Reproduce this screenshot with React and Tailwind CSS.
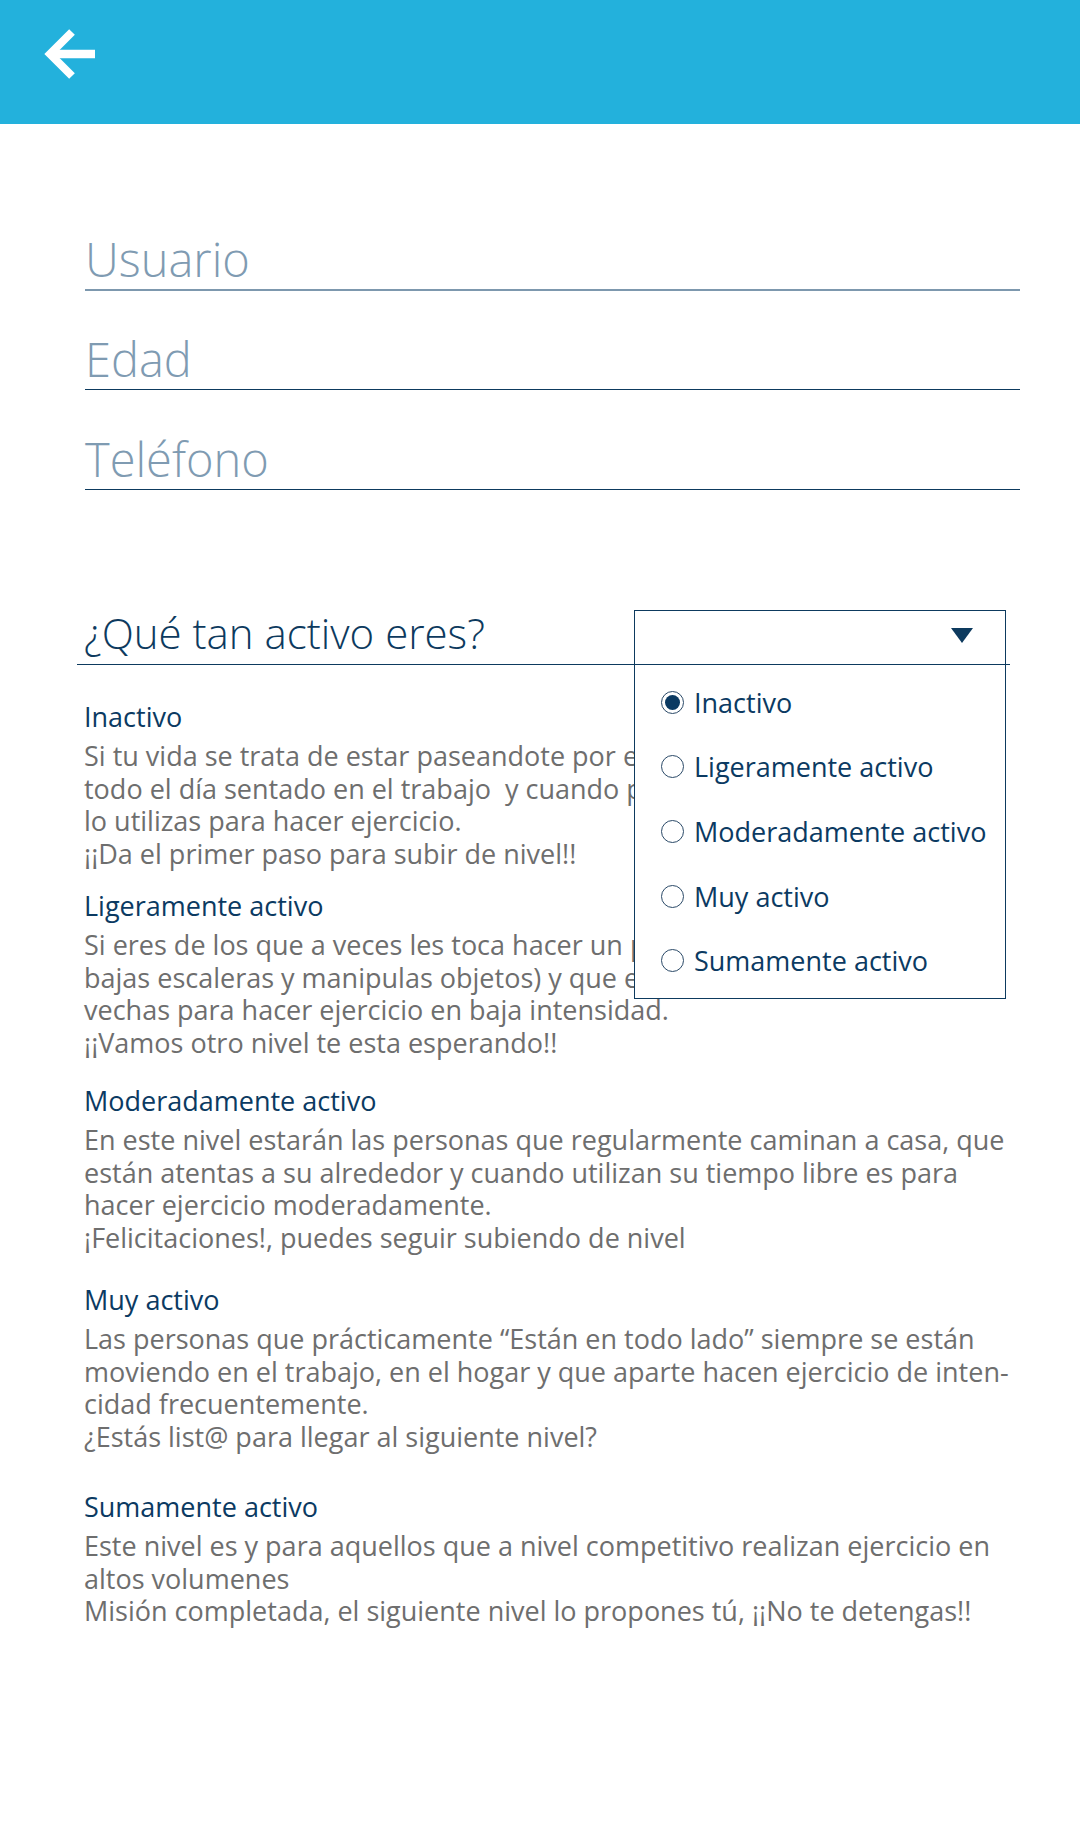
import { useState } from 'react';

const levels = [
  {
    title: 'Inactivo',
    gap: 'mt-0',
    lines: [
      'Si tu vida se trata de estar paseandote por el sofá de tu casa o pasas',
      'todo el día sentado en el trabajo  y cuando por fin tienes tiempo no',
      'lo utilizas para hacer ejercicio.',
      '¡¡Da el primer paso para subir de nivel!!',
    ],
  },
  {
    title: 'Ligeramente activo',
    gap: 'mt-[19.5px]',
    lines: [
      'Si eres de los que a veces les toca hacer un poco de actividad (caminas,',
      'bajas escaleras y manipulas objetos) y que en tu tiempo libre apro-',
      'vechas para hacer ejercicio en baja intensidad.',
      '¡¡Vamos otro nivel te esta esperando!!',
    ],
  },
  {
    title: 'Moderadamente activo',
    gap: 'mt-[25.5px]',
    lines: [
      'En este nivel estarán las personas que regularmente caminan a casa, que',
      'están atentas a su alrededor y cuando utilizan su tiempo libre es para',
      'hacer ejercicio moderadamente.',
      '¡Felicitaciones!, puedes seguir subiendo de nivel',
    ],
  },
  {
    title: 'Muy activo',
    gap: 'mt-[29.5px]',
    lines: [
      'Las personas que prácticamente “Están en todo lado” siempre se están',
      'moviendo en el trabajo, en el hogar y que aparte hacen ejercicio de inten-',
      'cidad frecuentemente.',
      '¿Estás list@ para llegar al siguiente nivel?',
    ],
  },
  {
    title: 'Sumamente activo',
    gap: 'mt-[37.5px]',
    lines: [
      'Este nivel es y para aquellos que a nivel competitivo realizan ejercicio en',
      'altos volumenes',
      'Misión completada, el siguiente nivel lo propones tú, ¡¡No te detengas!!',
    ],
  },
];

const fields = [
  { label: 'Usuario', cls: 'mt-[106px] border-b-2 border-[#7d98ae]' },
  { label: 'Edad', cls: 'mt-[39px] border-b-[1.5px] border-[#0d3a5e]' },
  { label: 'Teléfono', cls: 'mt-[40px] border-b-[1.5px] border-[#0d3a5e]' },
];

function BackArrow() {
  return (
    <svg width="60" height="60" viewBox="0 0 60 60" fill="none">
      <path d="M10 30 H55" stroke="white" strokeWidth="8.5" />
      <path
        d="M32 8 L10 30 L32 52"
        stroke="white"
        strokeWidth="8"
        strokeLinejoin="miter"
        strokeLinecap="butt"
      />
    </svg>
  );
}

function Radio({ checked }) {
  return (
    <span className="flex h-[23px] w-[23px] shrink-0 items-center justify-center rounded-full border-[1.5px] border-[#2b4a68] bg-white">
      {checked && <span className="h-[15px] w-[15px] rounded-full bg-[#0b3a62]" />}
    </span>
  );
}

export default function App() {
  const [level, setLevel] = useState('Inactivo');

  return (
    <div
      className="min-h-[1824px] w-[1080px] bg-white"
      style={{ fontFamily: '"Open Sans", "Liberation Sans", sans-serif' }}
    >
      <div className="flex h-[124px] items-start bg-[#23b1dc] pl-[40px] pt-[24px]">
        <BackArrow />
      </div>

      <div className="pl-[85px] pr-[60px]">
        {fields.map((f) => (
          <div
            key={f.label}
            className={`text-[47px] font-light leading-[59px] text-[#7f9bb2] ${f.cls}`}
          >
            {f.label}
          </div>
        ))}
      </div>

      <div className="relative ml-[77px] mr-[70px] mt-[112px] border-b-[1.5px] border-[#0d3a5e] pl-[7px] text-[42px] font-light leading-[62px] text-[#0d3a5e]">
        ¿Qué tan activo eres?
        <div className="absolute left-[557px] top-[8px] z-10 w-[372px] border-[1.5px] border-[#0d3a5e] bg-white">
          <div className="flex h-[54px] items-center justify-end border-b-[1.5px] border-[#0d3a5e] pb-[4px] pr-[32px]">
            <span className="h-0 w-0 border-l-[11px] border-r-[11px] border-t-[15px] border-l-transparent border-r-transparent border-t-[#0d3a5e]" />
          </div>
          <div className="pb-[5px] pt-[5px]">
            {levels.map((l) => (
              <button
                key={l.title}
                type="button"
                onClick={() => setLevel(l.title)}
                className="flex h-[64.6px] w-full items-center gap-[10px] pl-[26px] text-left text-[27px] font-normal leading-none text-[#0b3a62]"
              >
                <Radio checked={level === l.title} />
                <span>{l.title}</span>
              </button>
            ))}
          </div>
        </div>
      </div>

      <div className="mt-[36px] pl-[84px] pb-[100px]">
        {levels.map((l) => (
          <div key={l.title} className={l.gap}>
            <div className="mb-[6.5px] text-[27px] leading-[32.6px] text-[#0b3a62]">{l.title}</div>
            {l.lines.map((line, i) => (
              <div
                key={i}
                className="whitespace-pre text-[27px] leading-[32.6px] text-[#6e6e6e]"
              >
                {line}
              </div>
            ))}
          </div>
        ))}
      </div>
    </div>
  );
}
